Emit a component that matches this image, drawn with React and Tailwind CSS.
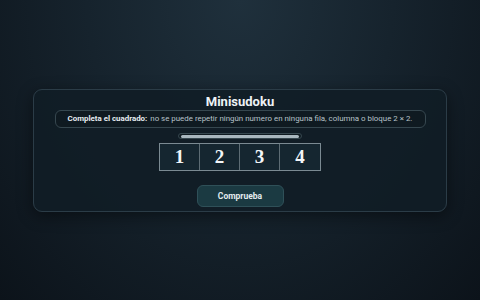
import React from 'react';

export default function App() {
  const numbers = [1, 2, 3, 4];

  return (
    <div
      className="h-[300px] w-[480px] flex flex-col items-center pt-[89px] bg-[radial-gradient(ellipse_at_50%_0%,#1f303c_0%,#16232d_45%,#0c131a_100%)]"
      style={{ fontFamily: 'Roboto, "Liberation Sans", Arial, sans-serif' }}
    >
      {/* Card */}
      <div className="w-[414px] h-[123px] rounded-[9px] border border-[#2b3c47] bg-[#111d26]/90 shadow-[0_4px_16px_rgba(0,0,0,0.45)] flex flex-col items-center pt-[4px]">
        <h1 className="text-[13px] leading-[16px] font-bold text-[#eef3f6]">Minisudoku</h1>

        {/* Instruction */}
        <div className="w-[371px] h-[18px] rounded-[6px] border border-[#36474f] bg-[#0f1a21] flex items-center justify-center text-[7.9px] text-[#b7c3ca] whitespace-nowrap">
          <span className="font-bold text-[#e6edf1]">Completa el cuadrado:</span>
          <span className="ml-[3px]">no se puede repetir ningún numero en ninguna fila, columna o bloque 2 × 2.</span>
        </div>

        {/* Progress bar */}
        <div className="mt-[5px] w-[124px] h-[6px] rounded-full border border-[#36474f] bg-[#0f1a21] flex items-center px-[2px]">
          <div className="h-[3px] w-full rounded-full bg-[#a9b7bf]" />
        </div>

        {/* Grid */}
        <div className="mt-[4px] flex border border-[#7b8a92]">
          {numbers.map((n, i) => (
            <div
              key={n}
              className={
                'w-[40px] h-[26px] flex items-center justify-center bg-[#152630] text-[#f3f6f8] text-[19px] font-bold ' +
                (i < 3 ? 'border-r border-[#5d6c74]' : '')
              }
              style={{ fontFamily: '"Liberation Serif", "Times New Roman", serif' }}
            >
              {n}
            </div>
          ))}
        </div>

        {/* Button */}
        <button className="mt-[14px] w-[87px] h-[22px] rounded-[6px] border border-[#2f5058] bg-[#1b3a42] text-[8.5px] font-bold text-[#e3ecef]">
          Comprueba
        </button>
      </div>
    </div>
  );
}
